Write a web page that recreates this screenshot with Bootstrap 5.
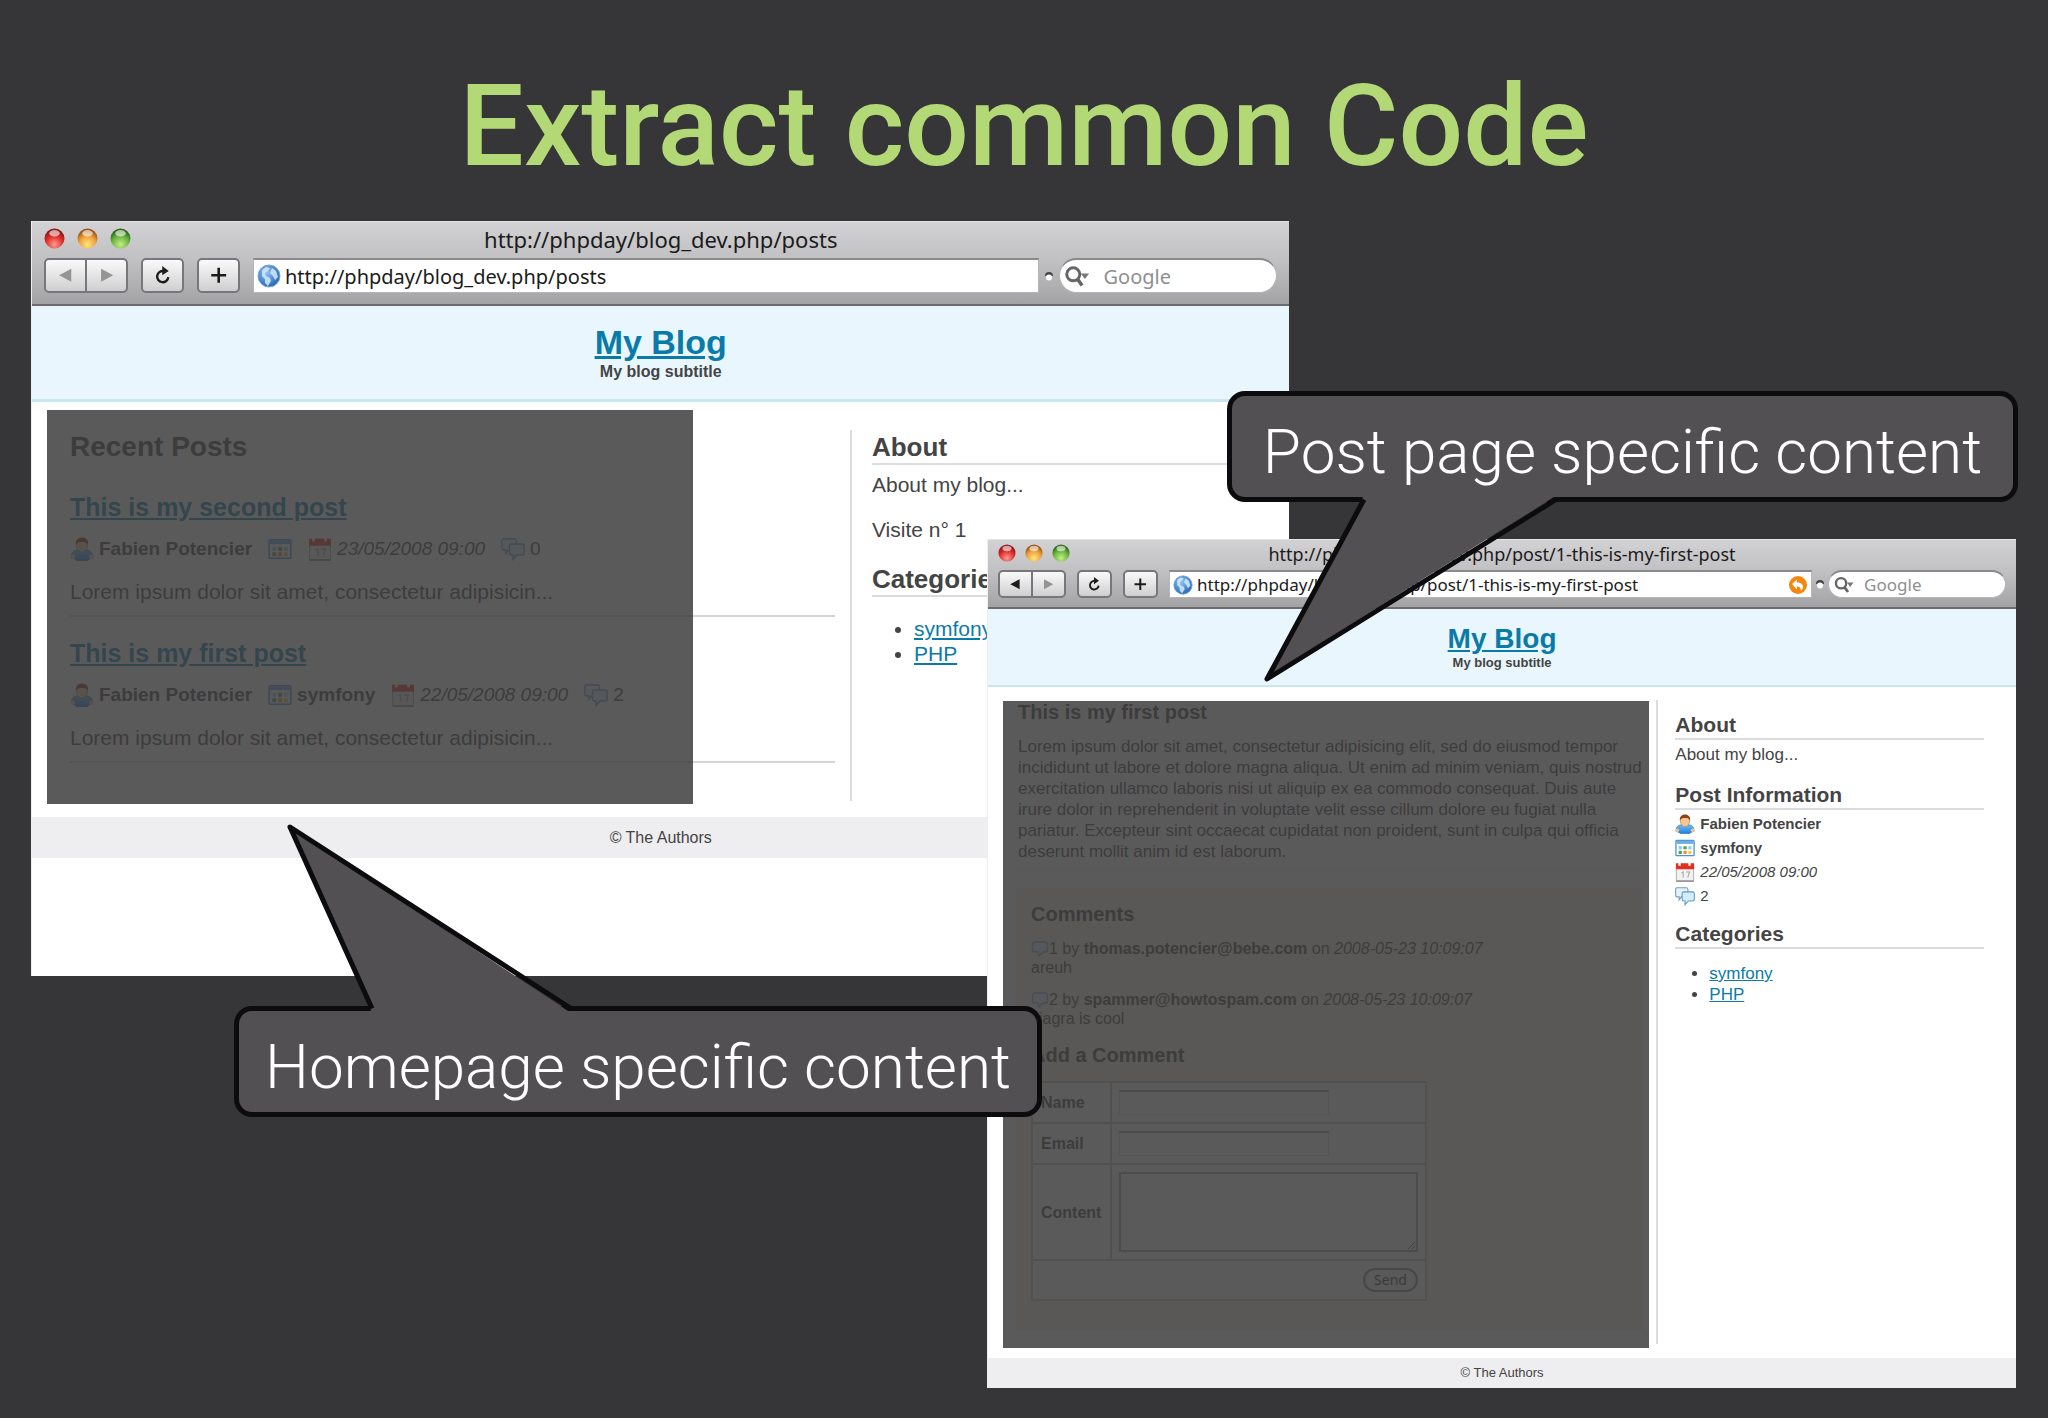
<!DOCTYPE html>
<html lang="en">
<head>
<meta charset="utf-8">
<meta name="viewport" content="width=device-width, initial-scale=1">
<title>Extract common Code</title>
<link href="https://cdn.jsdelivr.net/npm/bootstrap@5.3.0/dist/css/bootstrap.min.css" rel="stylesheet">
<script src="https://cdn.jsdelivr.net/npm/bootstrap@5.3.0/dist/js/bootstrap.bundle.min.js"></script>
<style>
  body { background: #363537; font-family: "Liberation Sans", Arial, sans-serif; color: #444; }
  .slide { min-height: 100vh; overflow: hidden; }
  .slide-title { font: 500 114px/134px Roboto, sans-serif; color: #b2d975; padding-top: 59px; }

  /* browser windows */
  .browser { position: absolute; background: #fff; border-left: 1px solid #eee; }
  .browser-lg { left: 31px; top: 221px; width: 61.45%; min-height: 755px;
    --title-h: 34px; --ctl-h: 35px; --ctl-w: 43px; --title-fs: 22px; --ui-fs: 20px; --light: 21px; --light-gap: 12px;
    --pad: 12px; --gap: 13px; --search: 218px; --blog: 34px; --blog-lh: 40px; --sub: 16px; --sub-lh: 20px; --icon: 24px;
    --h: 26px; --h-lh: 32px; --txt: 21px; --txt-lh: 26px; --line: 3px; }
  .browser-sm { left: 987px; top: 539px; width: 50.25%;
    --title-h: 28px; --ctl-h: 28px; --ctl-w: 35px; --title-fs: 18px; --ui-fs: 17px; --light: 18px; --light-gap: 9px;
    --pad: 10px; --gap: 11px; --search: 178px; --blog: 28px; --blog-lh: 33px; --sub: 13px; --sub-lh: 16px; --icon: 20px;
    --h: 21px; --h-lh: 26px; --txt: 17px; --txt-lh: 20px; --line: 2px; }
  .chrome { background: linear-gradient(#d2d1d3, #bfbec1 50%, #a3a2a5); border-top: 1px solid #e4e4e4; border-bottom: 2px solid #6c6b6e;
    font-family: "Noto Sans", sans-serif; color: #1b1b1b; font-size: var(--title-fs); padding: 0 var(--pad); }
  .chrome-title { height: var(--title-h); margin-bottom: 2px; line-height: var(--title-h); }
  .lights { position: absolute; left: 0; top: -1px; height: 100%; gap: var(--light-gap); }
  .lights svg { width: var(--light); height: var(--light); }
  .tools { gap: var(--gap); height: var(--ctl-h); }
  .browser-lg .tools { margin-bottom: 11px; }
  .browser-sm .tools { margin-bottom: 9px; }
  .ctl { width: var(--ctl-w); height: var(--ctl-h); padding: 0; border: 2px solid #77767a; border-radius: 5px;
    background: linear-gradient(#fafafa, #cfcfd1); display: flex; align-items: center; justify-content: center; color: #1c1c1c; }
  .ctl svg { width: 60%; height: 60%; }
  .ctl-off { color: #949494; }
  .nav-pair .ctl:first-child { border-radius: 5px 0 0 5px; margin-right: -2px; }
  .nav-pair .ctl:last-child { border-radius: 0 5px 5px 0; }
  .field { background: #fff; height: var(--ctl-h); border: 1px solid #b5b4b7; border-top: 2px solid #8a898c; gap: 4px; padding: 0 3px; }
  .field input { border: 0; outline: 0; background: none; min-width: 0; padding: 0; color: #1b1b1b; font-size: var(--ui-fs); line-height: 20px; }
  .globe { width: var(--icon); height: var(--icon); flex: none; }
  .grip { width: 8px; height: 14px; flex: none; margin: 0 -7px; }
  .search { width: var(--search); border-radius: 20px; flex: none; }
  .search svg { height: 70%; width: 28px; flex: none; }
  .browser-sm .search svg { width: 24px; }
  .search input::placeholder { color: #8f8f8f; opacity: 1; }

  /* blog pages */
  .browser a { color: #0a7ba8; }
  .masthead { background: #e9f6fe; border-bottom: var(--line) solid #c9e7f0; text-align: center; font-weight: 700; }
  .masthead div { font-size: var(--blog); line-height: var(--blog-lh); }
  .masthead small { font-size: var(--sub); line-height: var(--sub-lh); font-weight: 700; display: block; }
  .browser-lg .masthead { padding: 16px 0 17px; }
  .browser-sm .masthead { padding: 13px 0 14px; }
  .page { position: relative; }
  .browser-lg .page { padding: 28px 39px 16px 38px; }
  .browser-sm .page { padding: 13px 32px 14px 28px; }
  .browser-lg .posts { width: 64.8%; padding-bottom: 17px; margin-right: 15px; }
  .browser-sm .article { width: 64.8%; padding-bottom: 14px; margin-right: 13px; }
  .side { border-left: 2px solid #dcdbde; }
  .browser-lg .side { padding-left: 20px; }
  .browser-sm .side { padding: 12px 0 0 17px; }
  .side h2 { font-size: var(--h); line-height: var(--h-lh); font-weight: 700; border-bottom: 2px solid #dcdbde; margin: 0; }
  .side p, .cats { font-size: var(--txt); line-height: var(--txt-lh); }
  .browser-lg .side h2 { padding-top: 1px; margin-bottom: 7px; }
  .browser-lg .side p { margin-bottom: 19px; }
  .browser-lg .cats { padding-left: 42px; line-height: 25px; margin: 19px 0 0; }
  .browser-sm .side h2 { margin-bottom: 5px; }
  .browser-sm .side p { margin-bottom: 17px; }
  .browser-sm .cats { padding-left: 34px; line-height: 21px; margin: 14px 0 0; }
  .posts h2 { font-size: 28px; line-height: 34px; font-weight: 700; margin: 0 0 28px; }
  .post { border-bottom: 2px solid #d5d3d8; padding-bottom: 10px; margin-bottom: 21px; }
  .post h3 { font-size: 25px; line-height: 30px; font-weight: 700; margin: 0 0 15px; }
  .meta { font-size: 19px; line-height: 24px; margin-bottom: 18px; gap: 16px; }
  .meta span { display: inline-flex; align-items: center; gap: 5px; }
  .ico { width: var(--icon); height: var(--icon); flex: none; }
  .post p { font-size: 21px; line-height: 26px; margin: 0; }
  .facts { font-size: 15px; line-height: 24px; margin: -3px 0 13px; }
  .facts li { display: flex; align-items: center; gap: 5px; }
  .article h1 { font-size: 20px; line-height: 24px; font-weight: 700; margin: 0 0 12px; padding-left: 2px; }
  .article .copy { font-size: 17px; line-height: 21px; margin: 0 0 17px; padding: 0 0 8px 2px; border-bottom: 1px solid #eee; }
  .comments { background: #f2f0dc; padding: 14px 15px 29px; font-size: 16px; line-height: 19px; }
  .comments h2 { font-size: 20px; line-height: 24px; font-weight: 700; margin: 0 0 13px; }
  .comments p { margin-bottom: 13px; }
  .comments .bubble { width: 18px; height: 16px; vertical-align: -3px; }
  .comments h2.add { margin: 15px 0 14px; }
  .comment-form { width: 396px; background: #fff; border-collapse: collapse; font-size: 16px; }
  .comment-form th, .comment-form td { border: 2px solid #c9c7b8; padding: 7px; vertical-align: middle; line-height: 19px; }
  .comment-form th { padding: 0 8px; width: 79px; }
  .comment-form input { display: block; width: 210px; height: 25px; border: 1px solid #ddd; border-top: 2px solid #999; }
  .comment-form textarea { display: block; width: 100%; height: 80px; border: 2px solid #aaa; }
  .send { border: 2px solid #888; border-radius: 12px; background: #f4f4f4; width: 55px; height: 24px; padding: 0; font: 14px/18px "Noto Sans", sans-serif; color: #333; }
  .foot { background: #eeedef; text-align: center; font-size: var(--sub); }
  .browser-lg .foot { line-height: 41px; }
  .browser-sm .foot { line-height: 30px; }
  .shade { position: absolute; left: 15px; background: rgba(60, 58, 60, .84); pointer-events: none; }
  .browser-lg .shade { top: 8px; bottom: 13px; width: 51.4%; }
  .browser-sm .shade { top: 14px; bottom: 10px; width: 62.8%; }

  /* callouts */
  .callout { position: absolute; background: #525053; border: 5px solid #0c0c0e; border-radius: 18px; color: #fff;
    font: 300 62px/91px Roboto, sans-serif; padding-top: 10px; text-align: center; white-space: nowrap; }
  .callout svg { position: absolute; overflow: visible; }
  .callout-post { left: 1227px; top: 391px; width: 791px; }
  .callout-post svg { left: 35px; top: 101px; }
  .callout-home { left: 234px; top: 1006px; width: 808px; }
  .callout-home svg { left: 51px; top: -184px; }
</style>
</head>
<body>
<svg width="0" height="0" class="position-absolute" aria-hidden="true">
  <defs>
    <radialGradient id="red" cx=".5" cy=".8" r=".7"><stop offset="0" stop-color="#ff9c94"/><stop offset=".6" stop-color="#e0302c"/><stop offset="1" stop-color="#8e1518"/></radialGradient>
    <radialGradient id="amber" cx=".5" cy=".8" r=".7"><stop offset="0" stop-color="#ffe87e"/><stop offset=".6" stop-color="#efa03c"/><stop offset="1" stop-color="#9a5518"/></radialGradient>
    <radialGradient id="green" cx=".5" cy=".8" r=".7"><stop offset="0" stop-color="#c3ee86"/><stop offset=".6" stop-color="#6bb640"/><stop offset="1" stop-color="#2c6a1c"/></radialGradient>
    <radialGradient id="sea" cx=".4" cy=".35" r=".7"><stop offset="0" stop-color="#8cc4f4"/><stop offset="1" stop-color="#1e62b4"/></radialGradient>
    <linearGradient id="shirt" x2="0" y2="1"><stop offset="0" stop-color="#6cc0f8"/><stop offset="1" stop-color="#1e7fe0"/></linearGradient>
  </defs>
  <symbol id="globe" viewBox="0 0 24 24"><circle cx="12" cy="12" r="11" fill="url(#sea)" stroke="#7fa6d4"/><path d="M5 6l4-3 4 1-2 3-3 2 1 3 4 2 1 3-3 5-3-3v-4L5 12zM15 4l4 3 2 6-3 3-2-4-3-3z" fill="#d4e8fa" opacity=".85"/></symbol>
  <symbol id="back" viewBox="0 0 20 20"><path d="M16 3v14L3 10z" fill="currentColor"/></symbol>
  <symbol id="fwd" viewBox="0 0 20 20"><path d="M4 3v14l13-7z" fill="currentColor"/></symbol>
  <symbol id="reload" viewBox="0 0 20 20"><path d="M11 5.500a6 6 0 1 0 5 6.500" fill="none" stroke="currentColor" stroke-width="2.600"/><path d="M9.500 0l7 5.300-7 4.700z" fill="currentColor"/></symbol>
  <symbol id="plus" viewBox="0 0 20 20"><path d="M10 2v16M2 10h16" stroke="currentColor" stroke-width="2.800"/></symbol>
  <symbol id="lens" viewBox="0 0 28 24"><circle cx="10" cy="10" r="7" fill="none" stroke="#666" stroke-width="3.200"/><path d="M14.500 15l5 7" stroke="#666" stroke-width="3.800"/><path d="M18 9h9l-4.500 6z" fill="#777"/></symbol>
  <symbol id="grip" viewBox="0 0 8 14"><path d="M0 7a4 4 0 0 1 8 0z" fill="#444"/><circle cx="4" cy="8.500" r="3" fill="#fff"/></symbol>
  <symbol id="user" viewBox="0 0 22 22"><path d="M1 19c0-5 3-7 6-7h8c3 0 6 2 6 7l-3 1-2 1.500H6L4 20z" fill="url(#shirt)" stroke="#1b63ba" stroke-width=".7"/><circle cx="2.500" cy="18" r="2" fill="#f6c795"/><circle cx="19.500" cy="18" r="2" fill="#f6c795"/><ellipse cx="11" cy="8" rx="5" ry="6" fill="#f6c795" stroke="#a86a30" stroke-width=".6"/><path d="M5.500 7.500C4.500 3 7.500.5 11 .5s6.500 2.500 5.500 7c-1-3-3-3-5.500-3s-4.500 0-5.500 3z" fill="#87421a"/></symbol>
  <symbol id="sheet" viewBox="0 0 22 22"><rect x="1" y="2.500" width="20" height="17" rx="1" fill="#fff" stroke="#4f90d0" stroke-width="1.400"/><path d="M1.500 3h19v3.500h-19z" fill="#6aaee6"/><path d="M4 9h3.500v3.500H4z" fill="#8cc4f4"/><path d="M9.300 9h3.500v3.500H9.300zM4 14h3.500v3.500H4z" fill="#48a64a"/><path d="M14.600 9h3.500v3.500h-3.500z" fill="#8fd0f4"/><path d="M9.300 14h3.500v3.500H9.300z" fill="#f08a30"/><path d="M14.600 14h3.500v3.500h-3.500z" fill="#f8c648"/></symbol>
  <symbol id="cal" viewBox="0 0 22 22"><path d="M1.500 2h19v19h-19z" fill="#f2f2f2" stroke="#a9a9a9"/><path d="M1 1.500h20V8H1z" fill="#e03020"/><path d="M5 0v4M16 0v4" stroke="#fff" stroke-width="2.500"/><path d="M7 12l2-1v6M12 11h4l-2 6" fill="none" stroke="#aaa" stroke-width="1.200"/><path d="M1.500 21h19" stroke="#888" stroke-width="1.500"/></symbol>
  <symbol id="chat" viewBox="0 0 24 22"><path d="M2.500 1h11q2 0 2 2v7q0 2-2 2H7.500L5 15.500V12H2.500Q.8 12 .8 10V3q0-2 1.700-2z" fill="#e6f3fc" stroke="#6d9cc6" stroke-width="1.300"/><path d="M10.500 6h10.500q2.200 0 2.200 2v7q0 2-2.200 2H16l-4 4.500V17h-1.500q-2 0-2-2V8q0-2 2-2z" fill="#d5ecfa" stroke="#5b9acb" stroke-width="1.300"/></symbol>
  <symbol id="bubble" viewBox="0 0 18 16"><path d="M4 1h10q2.500 0 2.500 2.500v5Q16.500 11 14 11h-2l-4 4-1-4H4Q1.500 11 1.500 8.500v-5Q1.500 1 4 1z" fill="#dff0fa" stroke="#7fb2cc" stroke-width="1.400"/></symbol>
  <symbol id="snap" viewBox="0 0 20 20"><circle cx="10" cy="10" r="9" fill="#f7860f"/><path d="M4 9l5-4.500v3c4 0 6 2 6 4.500 0 2-1 3-2.500 3.500.5-3-1-4-3.500-4v3z" fill="#fff"/></symbol>
</svg>

<main class="slide position-relative">
  <h1 class="slide-title text-center m-0">Extract common Code</h1>

  <section class="browser browser-lg">
    <div class="chrome">
      <div class="chrome-title position-relative text-center">
        <div class="lights d-flex align-items-center">
          <svg viewBox="0 0 20 20"><circle cx="10" cy="10" r="9.500" fill="url(#red)"/><ellipse cx="10" cy="5" rx="5" ry="3" fill="#fff" opacity=".6"/></svg>
          <svg viewBox="0 0 20 20"><circle cx="10" cy="10" r="9.500" fill="url(#amber)"/><ellipse cx="10" cy="5" rx="5" ry="3" fill="#fff" opacity=".6"/></svg>
          <svg viewBox="0 0 20 20"><circle cx="10" cy="10" r="9.500" fill="url(#green)"/><ellipse cx="10" cy="5" rx="5" ry="3" fill="#fff" opacity=".6"/></svg>
        </div>
        http://phpday/blog_dev.php/posts
      </div>
      <div class="tools d-flex align-items-center">
        <div class="nav-pair d-flex">
          <button class="ctl ctl-off" type="button" aria-label="Back"><svg><use href="#back"/></svg></button>
          <button class="ctl ctl-off" type="button" aria-label="Forward"><svg><use href="#fwd"/></svg></button>
        </div>
        <button class="ctl" type="button" aria-label="Reload"><svg><use href="#reload"/></svg></button>
        <button class="ctl" type="button" aria-label="Add bookmark"><svg><use href="#plus"/></svg></button>
        <div class="field d-flex align-items-center flex-fill">
          <svg class="globe"><use href="#globe"/></svg>
          <input class="flex-fill" type="text" aria-label="Address" value="http://phpday/blog_dev.php/posts">
        </div>
        <svg class="grip"><use href="#grip"/></svg>
        <div class="field search d-flex align-items-center">
          <svg><use href="#lens"/></svg>
          <input class="flex-fill ms-2" type="search" aria-label="Search" placeholder="Google">
        </div>
      </div>
    </div>
    <header class="masthead"><div><a href="#">My Blog</a></div><small>My blog subtitle</small></header>
    <div class="page d-flex">
      <div class="posts flex-shrink-0">
        <h2>Recent Posts</h2>
        <article class="post">
          <h3><a href="#">This is my second post</a></h3>
          <div class="meta d-flex">
            <span><svg class="ico"><use href="#user"/></svg><b>Fabien Potencier</b></span>
            <span><svg class="ico"><use href="#sheet"/></svg></span>
            <span><svg class="ico"><use href="#cal"/></svg><i>23/05/2008 09:00</i></span>
            <span><svg class="ico"><use href="#chat"/></svg>0</span>
          </div>
          <p>Lorem ipsum dolor sit amet, consectetur adipisicin...</p>
        </article>
        <article class="post">
          <h3><a href="#">This is my first post</a></h3>
          <div class="meta d-flex">
            <span><svg class="ico"><use href="#user"/></svg><b>Fabien Potencier</b></span>
            <span><svg class="ico"><use href="#sheet"/></svg><b>symfony</b></span>
            <span><svg class="ico"><use href="#cal"/></svg><i>22/05/2008 09:00</i></span>
            <span><svg class="ico"><use href="#chat"/></svg>2</span>
          </div>
          <p>Lorem ipsum dolor sit amet, consectetur adipisicin...</p>
        </article>
      </div>
      <aside class="side flex-fill">
        <h2>About</h2>
        <p>About my blog...</p>
        <p>Visite n° 1</p>
        <h2>Categories</h2>
        <ul class="cats"><li><a href="#">symfony</a></li><li><a href="#">PHP</a></li></ul>
      </aside>
      <div class="shade"></div>
    </div>
    <footer class="foot">© The Authors</footer>
  </section>

  <section class="browser browser-sm">
    <div class="chrome">
      <div class="chrome-title position-relative text-center">
        <div class="lights d-flex align-items-center">
          <svg viewBox="0 0 20 20"><circle cx="10" cy="10" r="9.500" fill="url(#red)"/><ellipse cx="10" cy="5" rx="5" ry="3" fill="#fff" opacity=".6"/></svg>
          <svg viewBox="0 0 20 20"><circle cx="10" cy="10" r="9.500" fill="url(#amber)"/><ellipse cx="10" cy="5" rx="5" ry="3" fill="#fff" opacity=".6"/></svg>
          <svg viewBox="0 0 20 20"><circle cx="10" cy="10" r="9.500" fill="url(#green)"/><ellipse cx="10" cy="5" rx="5" ry="3" fill="#fff" opacity=".6"/></svg>
        </div>
        http://phpday/blog_dev.php/post/1-this-is-my-first-post
      </div>
      <div class="tools d-flex align-items-center">
        <div class="nav-pair d-flex">
          <button class="ctl" type="button" aria-label="Back"><svg><use href="#back"/></svg></button>
          <button class="ctl ctl-off" type="button" aria-label="Forward"><svg><use href="#fwd"/></svg></button>
        </div>
        <button class="ctl" type="button" aria-label="Reload"><svg><use href="#reload"/></svg></button>
        <button class="ctl" type="button" aria-label="Add bookmark"><svg><use href="#plus"/></svg></button>
        <div class="field d-flex align-items-center flex-fill">
          <svg class="globe"><use href="#globe"/></svg>
          <input class="flex-fill" type="text" aria-label="Address" value="http://phpday/blog_dev.php/post/1-this-is-my-first-post">
          <svg class="globe"><use href="#snap"/></svg>
        </div>
        <svg class="grip"><use href="#grip"/></svg>
        <div class="field search d-flex align-items-center">
          <svg><use href="#lens"/></svg>
          <input class="flex-fill ms-1" type="search" aria-label="Search" placeholder="Google">
        </div>
      </div>
    </div>
    <header class="masthead"><div><a href="#">My Blog</a></div><small>My blog subtitle</small></header>
    <div class="page d-flex">
      <div class="article flex-shrink-0">
        <h1>This is my first post</h1>
        <p class="copy">Lorem ipsum dolor sit amet, consectetur adipisicing elit, sed do eiusmod tempor incididunt ut labore et dolore magna aliqua. Ut enim ad minim veniam, quis nostrud exercitation ullamco laboris nisi ut aliquip ex ea commodo consequat. Duis aute irure dolor in reprehenderit in voluptate velit esse cillum dolore eu fugiat nulla pariatur. Excepteur sint occaecat cupidatat non proident, sunt in culpa qui officia deserunt mollit anim id est laborum.</p>
        <div class="comments">
          <h2>Comments</h2>
          <p><svg class="bubble"><use href="#bubble"/></svg>1 by <b>thomas.potencier@bebe.com</b> on <i>2008-05-23 10:09:07</i><br>areuh</p>
          <p><svg class="bubble"><use href="#bubble"/></svg>2 by <b>spammer@howtospam.com</b> on <i>2008-05-23 10:09:07</i><br>viagra is cool</p>
          <h2 class="add">Add a Comment</h2>
          <table class="comment-form">
            <tr><th><label for="name">Name</label></th><td><input id="name" type="text"></td></tr>
            <tr><th><label for="email">Email</label></th><td><input id="email" type="text"></td></tr>
            <tr><th><label for="content">Content</label></th><td><textarea id="content"></textarea></td></tr>
            <tr><td colspan="2" class="text-end"><button class="send" type="button">Send</button></td></tr>
          </table>
        </div>
      </div>
      <aside class="side flex-fill">
        <h2>About</h2>
        <p>About my blog...</p>
        <h2>Post Information</h2>
        <ul class="facts list-unstyled">
          <li><svg class="ico"><use href="#user"/></svg><b>Fabien Potencier</b></li>
          <li><svg class="ico"><use href="#sheet"/></svg><b>symfony</b></li>
          <li><svg class="ico"><use href="#cal"/></svg><i>22/05/2008 09:00</i></li>
          <li><svg class="ico"><use href="#chat"/></svg>2</li>
        </ul>
        <h2>Categories</h2>
        <ul class="cats"><li><a href="#">symfony</a></li><li><a href="#">PHP</a></li></ul>
      </aside>
      <div class="shade"></div>
    </div>
    <footer class="foot">© The Authors</footer>
  </section>

  <div class="callout callout-post">Post page specific content
    <svg width="288" height="182"><path d="M97-2L96 0 0 180 287 0v-2z" fill="#525053"/><path d="M97 2.500L0 182 289 2.500" fill="none" stroke="#0c0c0e" stroke-width="5" stroke-linejoin="round"/></svg>
  </div>
  <div class="callout callout-home">Homepage specific content
    <svg width="281" height="184"><path d="M82 186L0 0l281 186z" fill="#525053"/><path d="M82 181.500L0 0l281 181.500" fill="none" stroke="#0c0c0e" stroke-width="5" stroke-linejoin="round"/></svg>
  </div>
</main>
</body>
</html>
